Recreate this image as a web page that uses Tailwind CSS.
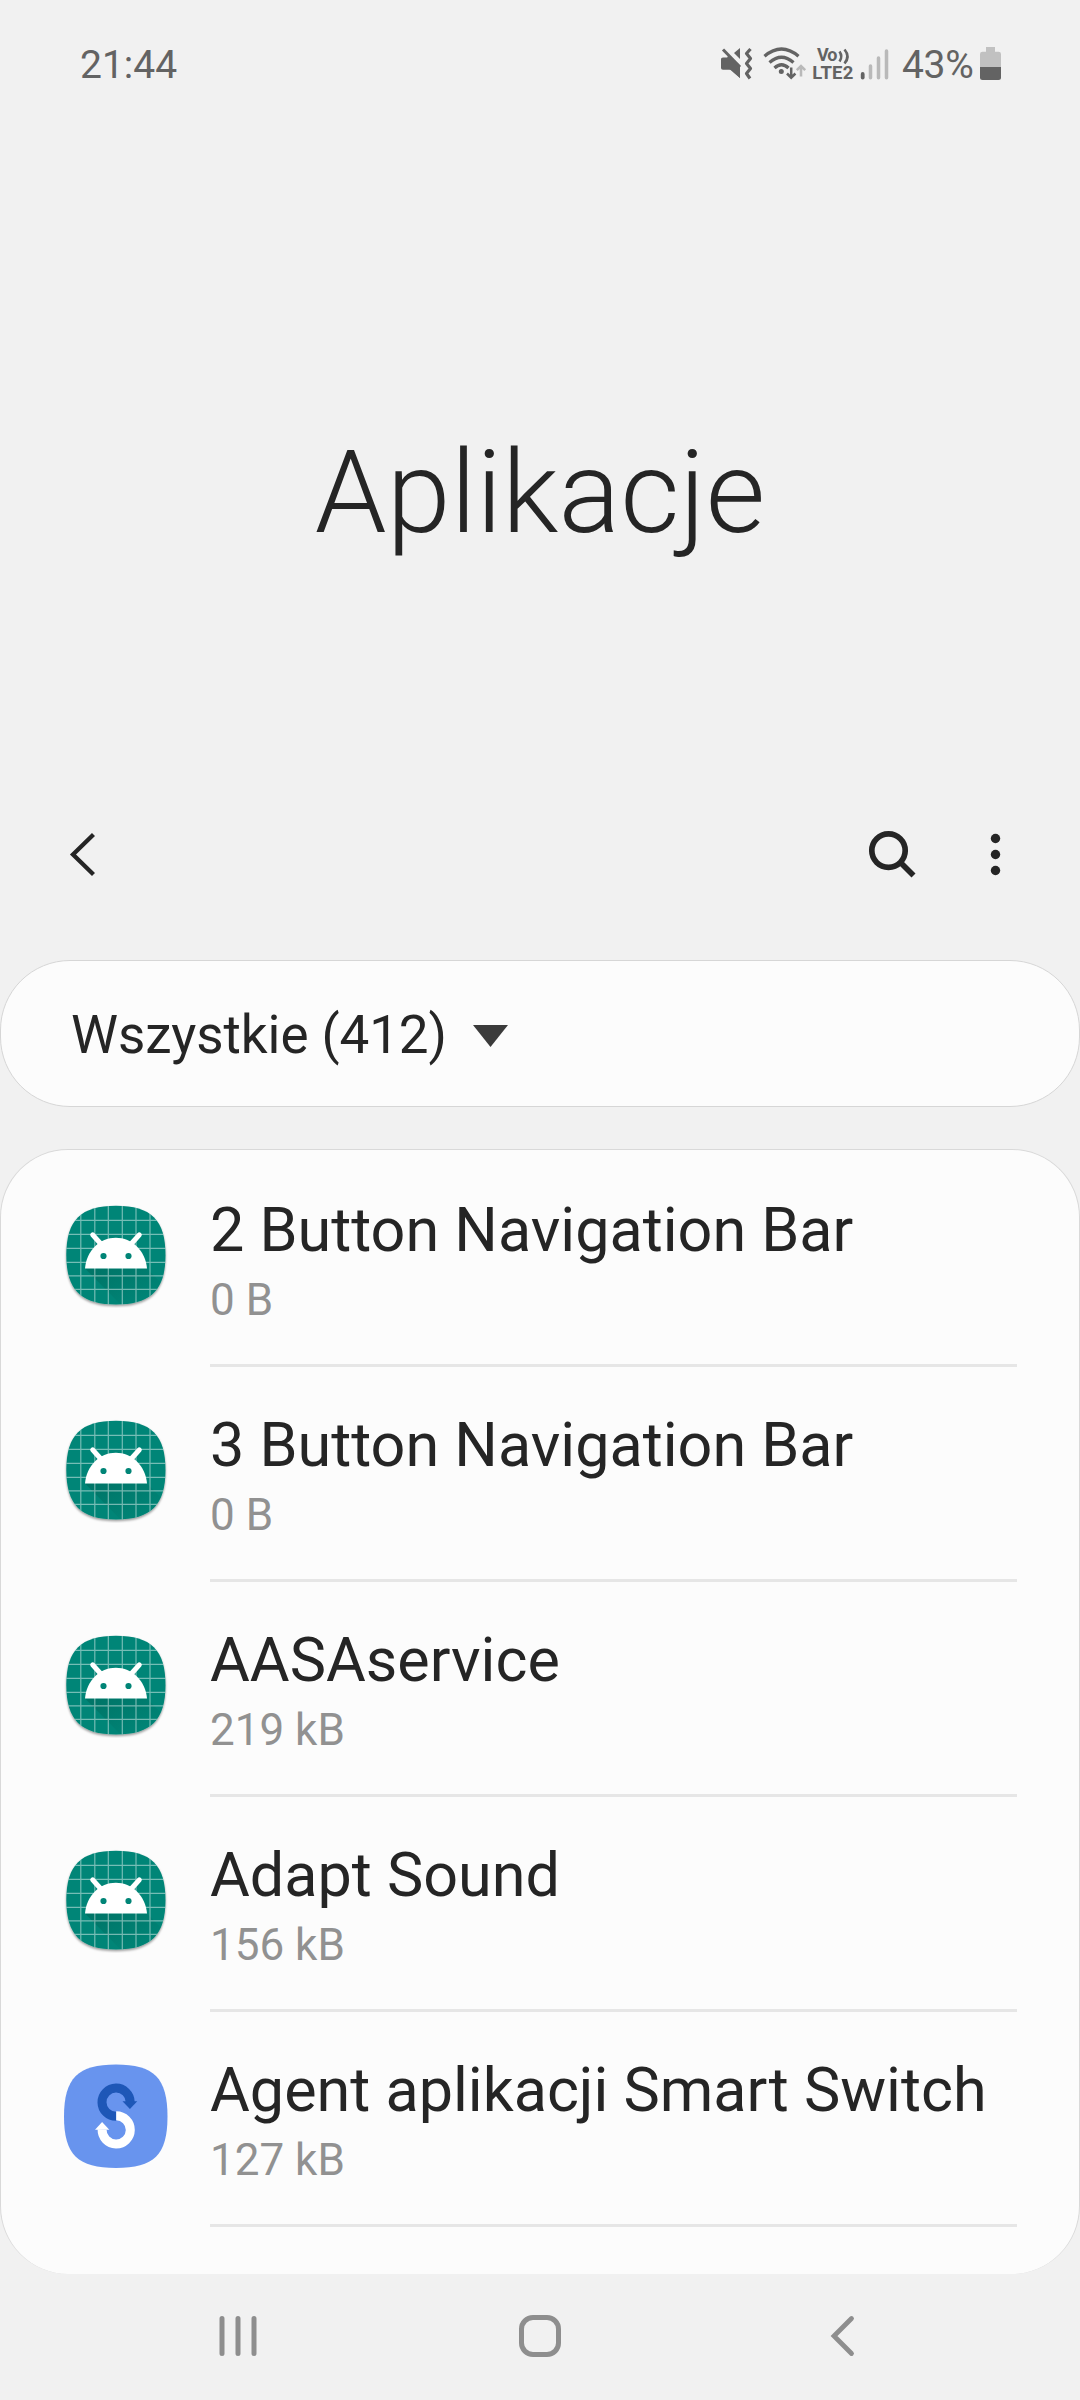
<!DOCTYPE html>
<html lang="pl">
<head>
<meta charset="utf-8">
<title>Aplikacje</title>
<script src="https://cdn.jsdelivr.net/npm/@tailwindcss/browser@4"></script>
</head>
<body class="w-[1080px] h-[2400px] overflow-hidden bg-[#f1f1f1] text-[#252525] font-[Roboto,sans-serif] flex flex-col">

<!-- Shared icon shapes -->
<svg class="absolute size-0" aria-hidden="true">
  <defs>
    <linearGradient id="fade" x1="0" y1="0" x2="1" y2="1"><stop offset="0" stop-color="#004d40" stop-opacity=".32"/><stop offset=".8" stop-color="#004d40" stop-opacity="0"/></linearGradient>
    <filter id="drop" x="-10%" y="-10%" width="120%" height="125%"><feDropShadow dx="0" dy="1.6" stdDeviation="1.2" flood-color="#000" flood-opacity=".4"/></filter>
    <clipPath id="squircle"><path d="M53 3.700C88 3.700 102.500 18 102.500 53S88 102.500 53 102.500 3.300 88 3.300 53 18 3.700 53 3.700Z"/></clipPath>
    <symbol id="android" viewBox="0 0 106 106">
      <path filter="url(#drop)" fill="#018577" d="M53 3.700C88 3.700 102.500 18 102.500 53S88 102.500 53 102.500 3.300 88 3.300 53 18 3.700 53 3.700Z"/>
      <g clip-path="url(#squircle)">
        <path d="M22 66.500L84 66.500L103 86V106H61Z" fill="url(#fade)"/>
        <path d="M17.800 0V106M31.800 0V106M45.300 0V106M59.300 0V106M73 0V106M87 0V106M0 18.300H106M0 32.300H106M0 46.300H106M0 60.300H106M0 73.800H106M0 87.300H106" stroke="#fff" stroke-opacity=".46" stroke-width="1.200"/>
      </g>
      <path d="M22 66.500C23.500 49 36.500 35.800 52.800 35.800S82.500 49 84 66.500Z" fill="#fff"/>
      <path d="M29.700 32.800L37.500 41.500M76.300 32.800L68.500 41.500" stroke="#fff" stroke-width="5" stroke-linecap="round"/>
      <circle cx="40.500" cy="54" r="3.100" fill="#018577"/><circle cx="65.500" cy="54" r="3.100" fill="#018577"/>
    </symbol>
    <symbol id="switch" viewBox="0 0 106 106">
      <path fill="#6894ee" d="M53 2.500C91 2.500 104.500 16 104.500 54.500S91 106 53 106 1 93 1 54.500 15 2.500 53 2.500Z"/>
      <path d="M53.200 54.300A14.100 14.100 0 1 1 67.200 40" fill="none" stroke="#1e57b7" stroke-width="9"/>
      <path d="M59.500 39.200H74.300L66.900 47Z" fill="#1e57b7"/>
      <path d="M53.200 53.800A14.100 14.100 0 1 1 39.100 67.500" fill="none" stroke="#fff" stroke-width="9"/>
      <path d="M32 67.800H46.300L39.100 60Z" fill="#fff"/>
    </symbol>
  </defs>
</svg>

<header class="flex h-32 shrink-0 items-center justify-between pl-20 pr-[78px] text-[39px] text-[#636363]">
  <span class="pt-[2px]">21:44</span>
  <div class="flex items-center">
    <svg class="h-[40px] w-[183px]" viewBox="717 43 183 40" fill="none">
      <path d="M721 58Q721 56.500 723 56.500H727L740 69V77L731 68.700H723Q721 68.700 721 67Z" fill="#636363"/>
      <path d="M727 56.500L729 54L740 64.500V77L727 66Z" fill="#636363"/>
      <path d="M723 48.500L740 66" stroke="#636363" stroke-width="3"/>
      <path d="M740 47V58L734 52Z" fill="#636363"/>
      <path d="M750.500 48L746.500 52.500L750.500 57.500L746.500 62.500L750.500 67.500L746.500 72.500L750 77.500" stroke="#636363" stroke-width="3.200" stroke-linejoin="round"/>
      <path d="M764.500 55.200Q781.500 40.800 798.500 55.200M769.500 61.500Q781.500 51 793.500 61.500M774.500 67Q781.500 60.500 788.500 67" stroke="#636363" stroke-width="3.300"/>
      <circle cx="781.300" cy="70.500" r="2.500" fill="#636363"/>
      <path d="M791.200 66.500V76M787 72.500L791.200 76.700L795.400 72.500" stroke="#636363" stroke-width="2.500"/>
      <path d="M801 75.500V65.500M796.800 69.200L801 65L805.200 69.200" stroke="#b9b9b9" stroke-width="2.500"/>
      <text x="817" y="60.300" font-size="18" font-weight="700" fill="#636363" textLength="20.500">Vo</text>
      <path d="M839.500 50.500Q843 55.500 839.500 60.500M844.500 48.500Q850.500 55.500 844.500 62.500" stroke="#636363" stroke-width="2.600"/>
      <text x="812.300" y="77.800" font-size="18.500" font-weight="700" fill="#636363" textLength="41">LTE2</text>
      <path d="M862.700 73V76.500" stroke="#636363" stroke-width="3.800" stroke-linecap="round"/>
      <path d="M870.500 65V76.700M878.500 57V76.700M886.500 50V76.700" stroke="#b9b9b9" stroke-width="3.500" stroke-linecap="round"/>
    </svg>
    <span class="ml-[2px] w-[76px] pt-[2px] -tracking-[0.3px]">43%</span>
    <svg class="h-[40px] w-6" viewBox="978 43 24 40">
      <path d="M986 46H995V50.700H998.500Q1001 50.700 1001 53V66H980V53Q980 50.700 982.500 50.700H986Z" fill="#c1c1c1"/>
      <path d="M980 66H1001V76.500Q1001 79 998.500 79H982.500Q980 79 980 76.500Z" fill="#636363"/>
    </svg>
  </div>
</header>

<div class="flex h-[729px] shrink-0 items-center justify-center pt-[2px] text-[115px] font-light">
  <h1>Aplikacje</h1>
</div>

<!-- Action bar -->
<nav class="-mt-[33px] flex h-[60px] shrink-0 items-center justify-between pl-[60px] pr-[70px]">
  <svg class="h-[60px] w-[50px]" viewBox="60 824 50 60" fill="none"><path d="M93.500 834.500L73 854.500L93.500 874.500" stroke="#252525" stroke-width="4.300"/></svg>
  <svg class="h-[60px] w-[150px]" viewBox="860 824 150 60">
    <circle cx="888.500" cy="850.600" r="16.700" fill="none" stroke="#252525" stroke-width="5.700"/>
    <path d="M900.500 862.500L913.500 875.500" stroke="#252525" stroke-width="5.700"/>
    <g fill="#252525"><circle cx="995.500" cy="838.500" r="4.700"/><circle cx="995.500" cy="854.500" r="4.700"/><circle cx="995.500" cy="870.500" r="4.700"/></g>
  </svg>
</nav>

<div class="mt-[76px] flex h-[147px] shrink-0 items-center rounded-[70px] border border-[#d6d6d6] bg-[#fcfcfc] pl-[70px] pt-[5px] text-[53px]">
  <span class="w-[402px] -tracking-[0.1px]">Wszystkie (412)</span>
  <svg class="h-[22px] w-[35px]" viewBox="0 0 35 22"><path d="M0 0H35L17.500 22Z" fill="#3b3b3b"/></svg>
</div>

<main class="mt-[42px] h-[1125px] shrink-0 rounded-[68px] border border-b-0 border-[#d9d9d9] bg-[#fcfcfc] pt-[2px]">
  <div class="flex h-[215px] pl-[62px] pr-[62px]">
    <svg class="mt-[50px] size-[106px] shrink-0"><use href="#android"/></svg>
    <div class="ml-[41px] flex-1 border-b-3 border-[#e6e6e6] pt-[43px]"><p class="text-[61.1px] leading-[70px] whitespace-nowrap">2 Button Navigation Bar</p><p class="mt-[10px] text-[44px] leading-[50px] text-[#919191]">0 B</p></div>
  </div>
  <div class="flex h-[215px] pl-[62px] pr-[62px]">
    <svg class="mt-[50px] size-[106px] shrink-0"><use href="#android"/></svg>
    <div class="ml-[41px] flex-1 border-b-3 border-[#e6e6e6] pt-[43px]"><p class="text-[61.1px] leading-[70px] whitespace-nowrap">3 Button Navigation Bar</p><p class="mt-[10px] text-[44px] leading-[50px] text-[#919191]">0 B</p></div>
  </div>
  <div class="flex h-[215px] pl-[62px] pr-[62px]">
    <svg class="mt-[50px] size-[106px] shrink-0"><use href="#android"/></svg>
    <div class="ml-[41px] flex-1 border-b-3 border-[#e6e6e6] pt-[43px]"><p class="text-[61.1px] leading-[70px] whitespace-nowrap">AASAservice</p><p class="mt-[10px] text-[44px] leading-[50px] text-[#919191]">219 kB</p></div>
  </div>
  <div class="flex h-[215px] pl-[62px] pr-[62px]">
    <svg class="mt-[50px] size-[106px] shrink-0"><use href="#android"/></svg>
    <div class="ml-[41px] flex-1 border-b-3 border-[#e6e6e6] pt-[43px]"><p class="text-[61.1px] leading-[70px] whitespace-nowrap">Adapt Sound</p><p class="mt-[10px] text-[44px] leading-[50px] text-[#919191]">156 kB</p></div>
  </div>
  <div class="flex h-[215px] pl-[62px] pr-[62px]">
    <svg class="mt-[50px] size-[106px] shrink-0"><use href="#switch"/></svg>
    <div class="ml-[41px] flex-1 border-b-3 border-[#e6e6e6] pt-[43px]"><p class="text-[61.1px] leading-[70px] whitespace-nowrap">Agent aplikacji Smart Switch</p><p class="mt-[10px] text-[44px] leading-[50px] text-[#919191]">127 kB</p></div>
  </div>
</main>

<!-- System navigation -->
<footer class="flex h-[124px] shrink-0 items-center justify-between pl-[214px] pr-[214px]">
  <svg class="h-12 w-12" viewBox="214 2312 48 48"><path d="M222 2318.500V2353.500M238 2318.500V2353.500M254 2318.500V2353.500" stroke="#8e8e8e" stroke-width="5" stroke-linecap="round"/></svg>
  <svg class="h-12 w-12" viewBox="516 2312 48 48"><rect x="521.500" y="2317.500" width="37" height="37" rx="11.500" fill="none" stroke="#8e8e8e" stroke-width="5"/></svg>
  <svg class="h-12 w-12" viewBox="818 2312 48 48"><path d="M851.500 2318.500L834 2336L851.500 2353.500" fill="none" stroke="#8e8e8e" stroke-width="4.800" stroke-linecap="round"/></svg>
</footer>
</body>
</html>
